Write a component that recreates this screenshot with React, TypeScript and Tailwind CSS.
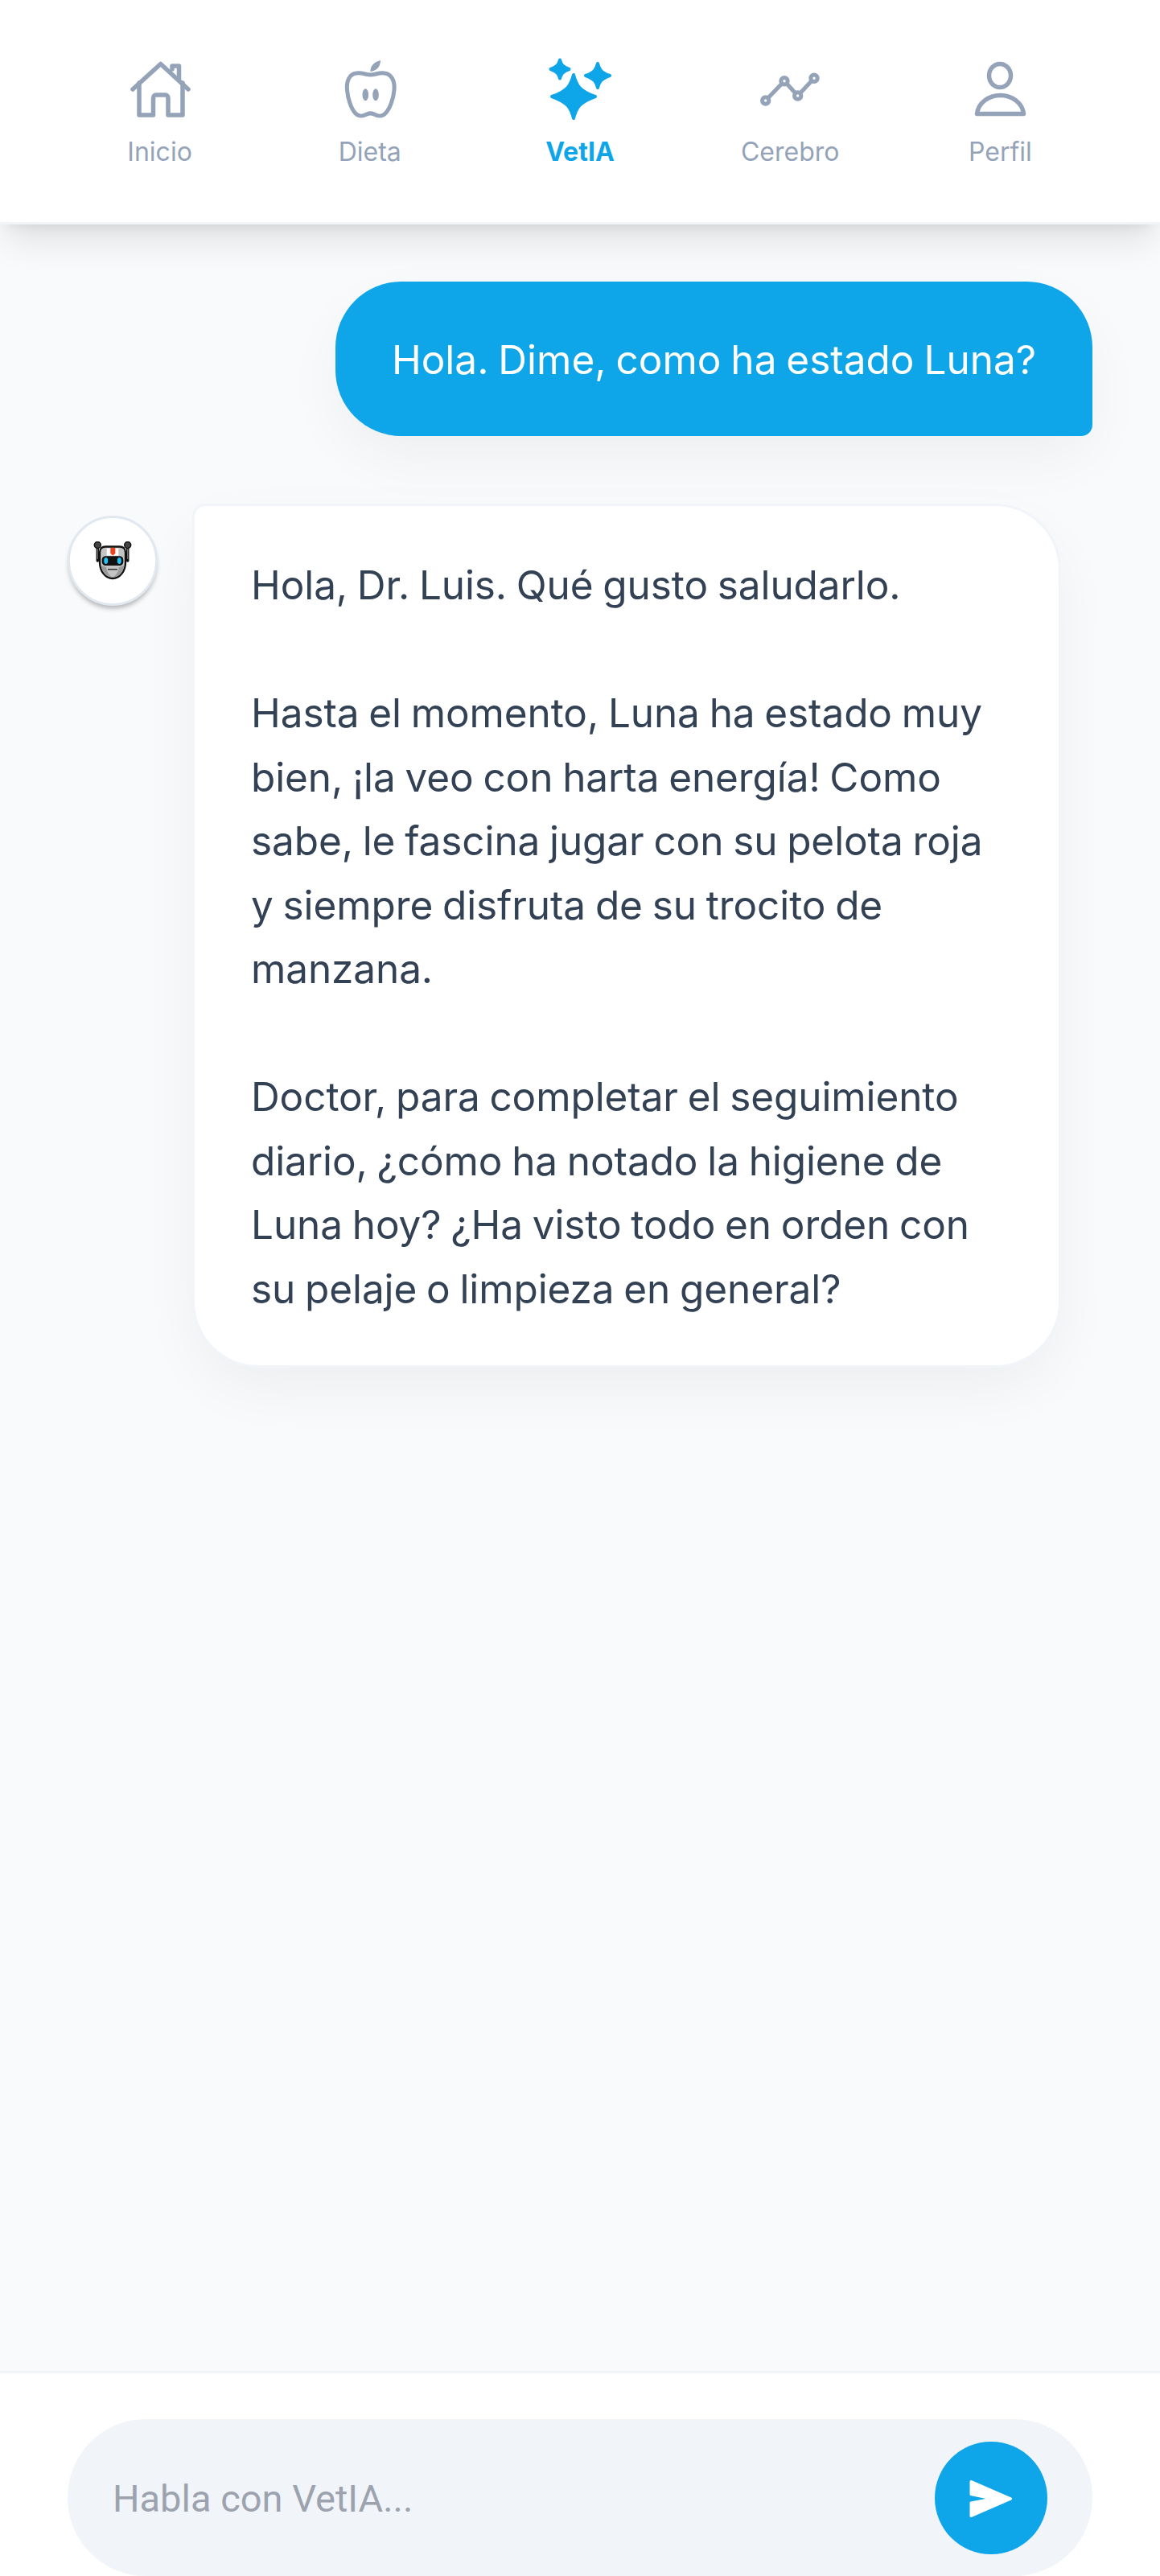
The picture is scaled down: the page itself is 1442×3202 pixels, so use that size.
import React from 'react'

const star = (cx: number, cy: number, r: number) => {
    const k = 0.26 * r
    return `M${cx} ${cy - r}C${cx + k * 0.5} ${cy - k * 2} ${cx + k} ${cy - k} ${cx + r} ${cy}C${cx + k} ${cy + k} ${cx + k * 0.5} ${cy + k * 2} ${cx} ${cy + r}C${cx - k * 0.5} ${cy + k * 2} ${cx - k} ${cy + k} ${cx - r} ${cy}C${cx - k} ${cy - k} ${cx - k * 0.5} ${cy - k * 2} ${cx} ${cy - r}Z`
}

const HomeIcon = () => (
    <svg viewBox="0 0 80 80" className="w-[80px] h-[80px]" fill="none" stroke="currentColor" strokeWidth="5.5" strokeLinecap="round" strokeLinejoin="round">
        <path d="M6 41L40.700 9.500L75 41" />
        <path d="M14 33V73H31.500V52C31.500 49.500 33 48 35 48H46.500C48.500 48 50 49.500 50 52V73H68V33" />
        <path d="M55 16V12H63.500V30" />
    </svg>
)

const AppleIcon = () => (
    <svg viewBox="0 0 80 80" className="w-[80px] h-[80px]" fill="none" stroke="currentColor" strokeWidth="5">
        <path d="M40.500 23C35 23 30 20 23 21C14 22 10.500 31 11.500 42C12.500 54 17 66 22 71C27 76 32 74 36 72C39 70.500 42 70.500 45 72C49 74 54 76 59 71C64 66 69 54 70 42C71 31 67 22 58 21C51 20 46 23 40.500 23Z" />
        <path d="M40.500 19C40 12 45 7 53 5C53 13 48 18 40.500 19Z" fill="currentColor" stroke="none" />
        <ellipse cx="34.300" cy="47.700" rx="3.800" ry="7.500" fill="currentColor" stroke="none" />
        <ellipse cx="47" cy="47.700" rx="3.800" ry="7.500" fill="currentColor" stroke="none" />
    </svg>
)

const SparkleIcon = () => (
    <svg viewBox="0 0 80 80" className="w-[80px] h-[80px]" fill="currentColor" stroke="currentColor" strokeWidth="4" strokeLinejoin="round">
        <path d={star(32, 50, 27)} />
        <path d={star(15, 16, 11.5)} />
        <path d={star(62, 24, 15)} />
    </svg>
)

const ChartIcon = () => (
    <svg viewBox="0 0 80 80" className="w-[80px] h-[80px]" fill="none" stroke="currentColor" strokeWidth="5">
        <path d="M9.700 55L33 30.700L49.700 49L70 27.300" />
        <circle cx="9.700" cy="55" r="4.200" fill="white" />
        <circle cx="33" cy="30.700" r="4.200" fill="white" />
        <circle cx="49.700" cy="49" r="4.200" fill="white" />
        <circle cx="70" cy="27.300" r="4.200" fill="white" />
    </svg>
)

const PersonIcon = () => (
    <svg viewBox="0 0 80 80" className="w-[80px] h-[80px]" fill="none" stroke="currentColor" strokeWidth="5.500" strokeLinejoin="round">
        <ellipse cx="40" cy="24" rx="13.500" ry="14.500" />
        <path d="M11.500 71.500C13 58 26 48.500 40.500 48.500C55 48.500 68 58 69.500 71.500Z" />
    </svg>
)

const RobotIcon = () => (
    <svg viewBox="0 0 48 48" className="w-[48px] h-[48px]">
        <path d="M5.300 6V24M42.700 6V24" stroke="#111" strokeWidth="3.500" strokeLinecap="round" />
        <path d="M5.300 8V22M42.700 8V22" stroke="#777" strokeWidth="1.200" />
        <circle cx="5.300" cy="4.500" r="4" fill="#444" stroke="#111" strokeWidth="1.500" />
        <circle cx="42.700" cy="4.500" r="4" fill="#444" stroke="#111" strokeWidth="1.500" />
        <path d="M8 14C8 9 11 6.500 15 6.500H33C37 6.500 40 9 40 14V26C40 37 33 46 24 46C15 46 8 37 8 26Z" fill="#c4c4c4" stroke="#111" strokeWidth="2.300" />
        <path d="M9.500 30L16 32C17 38 20 43 24 44.500C16 44.500 11 38 9.500 30ZM38.500 30L32 32C31 38 28 43 24 44.500C32 44.500 37 38 38.500 30Z" fill="#9a9a9a" />
        <rect x="16.700" y="8.500" width="14.600" height="9" fill="#fff" />
        <path d="M21.300 8H27.300V15L24.300 17.500L21.300 15Z" fill="#f0421c" />
        <rect x="10.700" y="18.300" width="26.600" height="11.700" rx="4.500" fill="#111" />
        <ellipse cx="15.700" cy="24" rx="2.500" ry="4" fill="#22c4f5" />
        <ellipse cx="32.300" cy="24" rx="2.500" ry="4" fill="#22c4f5" />
        <path d="M18 34.700H30" stroke="#333" strokeWidth="1.500" />
    </svg>
)

const SendIcon = () => (
    <svg viewBox="0 0 140 140" className="w-[140px] h-[140px]" fill="white" stroke="white" strokeWidth="3" strokeLinejoin="round">
        <path d="M45 49.500L94.500 71L45 92.500V76L71 71L45 65.500Z" />
    </svg>
)

const tabs = [
    { label: 'Inicio', icon: <HomeIcon /> },
    { label: 'Dieta', icon: <AppleIcon /> },
    { label: 'VetIA', icon: <SparkleIcon />, active: true },
    { label: 'Cerebro', icon: <ChartIcon /> },
    { label: 'Perfil', icon: <PersonIcon /> },
]

export default function App() {
    return (
        <div className="h-[3202px] flex flex-col bg-[#f8fafc] overflow-hidden font-['Inter','Noto_Sans',sans-serif]">
            <header className="relative z-10 h-[279px] shrink-0 grid grid-cols-5 px-[68px] pt-[70px] bg-white border-b-[3px] border-[#f1f5f9] shadow-[0_28px_41px_-8px_rgba(0,0,0,0.1),0_11px_16px_-11px_rgba(0,0,0,0.1)]">
                {tabs.map(tab => (
                    <div key={tab.label} className={`flex flex-col items-center ${tab.active ? 'text-[#0ea5e9]' : 'text-[#94a3b8]'}`}>
                        {tab.icon}
                        <span className={`mt-[17px] text-[32px] leading-[44px] ${tab.active ? 'font-bold' : 'font-normal'}`}>{tab.label}</span>
                    </div>
                ))}
            </header>

            <main className="flex-1 flex flex-col px-[84px] pt-[71px] text-[49.500px] [word-spacing:-2px]">
                <div className="self-end h-[192px] w-[941px] pt-[2px] flex items-center justify-center bg-[#0ea5e9] rounded-[82px] rounded-br-[14px] shadow-[0_28px_80px_-10px_rgba(0,0,0,0.06)] text-white leading-[80px] font-normal">
                    Hola. Dime, como ha estado Luna?
                </div>

                <div className="mt-[84px] flex items-start">
                    <div className="mt-[15px] w-[112px] h-[112px] shrink-0 flex items-center justify-center bg-white rounded-full border-[3px] border-[#e2e8f0] shadow-[0_5px_6px_-2px_rgba(0,0,0,0.3)]">
                        <RobotIcon />
                    </div>
                    <div className="ml-[43px] w-[1080px] pl-[70px] pt-[59px] pb-[55px] bg-white border-[3px] border-[#f1f5f9] rounded-[82px] rounded-tl-[16px] shadow-[0_28px_80px_-10px_rgba(0,0,0,0.06)] text-[#334155] leading-[79.500px] tracking-[-0.1px] font-normal">
                        <p>Hola, Dr. Luis. Qué gusto saludarlo.</p>
                        <p className="mt-[79.500px]">
                            Hasta el momento, Luna ha estado muy<br />
                            bien, ¡la veo con harta energía! Como<br />
                            sabe, le fascina jugar con su pelota roja<br />
                            y siempre disfruta de su trocito de<br />
                            manzana.
                        </p>
                        <p className="mt-[79.500px]">
                            Doctor, para completar el seguimiento<br />
                            diario, ¿cómo ha notado la higiene de<br />
                            Luna hoy? ¿Ha visto todo en orden con<br />
                            su pelaje o limpieza en general?
                        </p>
                    </div>
                </div>
            </main>

            <footer className="h-[255px] shrink-0 px-[84px] pt-[57px] bg-white border-t-[3px] border-[#f1f5f9]">
                <div className="h-[195px] flex items-center pl-[56px] pr-[56px] bg-[#f1f5f9] rounded-[97px]">
                    <input
                        className="flex-1 min-w-0 mt-[4px] bg-transparent outline-none text-[47px] font-['Roboto',sans-serif] placeholder:text-[#9ca3af]"
                        placeholder="Habla con VetIA..."
                    />
                    <button className="w-[140px] h-[140px] shrink-0 flex items-center justify-center bg-[#0ea5e9] rounded-full">
                        <SendIcon />
                    </button>
                </div>
            </footer>
        </div>
    )
}
